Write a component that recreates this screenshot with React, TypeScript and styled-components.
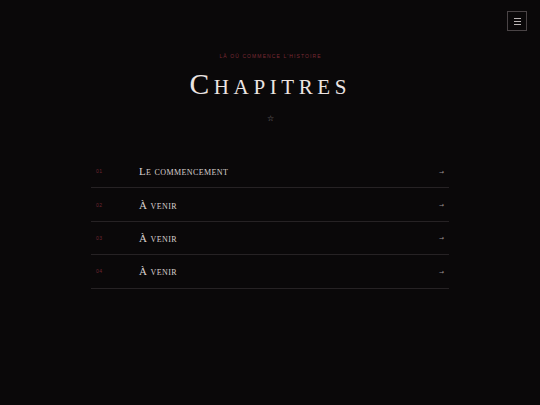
import React from "react";
import styled, { createGlobalStyle } from "styled-components";

const GlobalStyle = createGlobalStyle`
  html, body {
    margin: 0;
    padding: 0;
    background: #0a0809;
  }
  body {
    font-family: "Liberation Serif", "DejaVu Serif", serif;
  }
`;

const Page = styled.div`
  position: relative;
  width: 540px;
  height: 405px;
  background: #0a0809;
  display: flex;
  flex-direction: column;
  align-items: center;
  padding-top: 53px;
  box-sizing: border-box;
`;

const MenuButton = styled.button`
  position: absolute;
  top: 11px;
  right: 13px;
  width: 20px;
  height: 20px;
  padding: 0;
  background: transparent;
  border: 1px solid #4a4446;
  display: flex;
  flex-direction: column;
  align-items: center;
  justify-content: center;
  gap: 2px;
  box-sizing: border-box;

  span {
    display: block;
    width: 7px;
    height: 1px;
    background: #b9b3b4;
  }
`;

const Kicker = styled.div`
  font-family: "Liberation Sans", Arial, sans-serif;
  font-size: 5px;
  letter-spacing: 1.1px;
  padding-left: 1.1px;
  text-transform: uppercase;
  color: #7a2a35;
  line-height: 7px;
`;

const Title = styled.h1`
  margin: 7px 0 0;
  font-family: "Liberation Serif", "DejaVu Serif", serif;
  font-weight: normal;
  font-variant: small-caps;
  font-size: 29.5px;
  letter-spacing: 4.6px;
  padding-left: 0.6px;
  line-height: 34px;
  color: #ece4e2;
`;

const Star = styled.div`
  margin-top: 13px;
  font-size: 8px;
  line-height: 10px;
  color: #8a8284;
`;

const List = styled.ul`
  list-style: none;
  margin: 31px 0 0;
  padding: 0;
  width: 358px;
`;

const Row = styled.li`
  display: flex;
  align-items: center;
  height: 33.4px;
  border-bottom: 1px solid #262224;
  padding: 0 5px;
  box-sizing: border-box;
`;

const Num = styled.span`
  width: 43px;
  font-family: "Liberation Sans", Arial, sans-serif;
  font-size: 5px;
  letter-spacing: 0.5px;
  color: #6e2632;
`;

const Label = styled.span`
  flex: 1;
  font-variant: small-caps;
  font-size: 11px;
  letter-spacing: 0.4px;
  color: #d9d1cf;
`;

const Arrow = styled.span`
  font-family: "DejaVu Sans", sans-serif;
  font-size: 6px;
  color: #9a9092;
`;

const chapters = [
  { num: "01", title: "Le commencement" },
  { num: "02", title: "À venir" },
  { num: "03", title: "À venir" },
  { num: "04", title: "À venir" },
];

const App = () => {
  return (
    <>
      <GlobalStyle />
      <Page>
        <MenuButton aria-label="Menu">
          <span />
          <span />
          <span />
        </MenuButton>
        <Kicker>Là où commence l'histoire</Kicker>
        <Title>Chapitres</Title>
        <Star>☆</Star>
        <List>
          {chapters.map((c) => (
            <Row key={c.num}>
              <Num>{c.num}</Num>
              <Label>{c.title}</Label>
              <Arrow>→</Arrow>
            </Row>
          ))}
        </List>
      </Page>
    </>
  );
};

export default App;
